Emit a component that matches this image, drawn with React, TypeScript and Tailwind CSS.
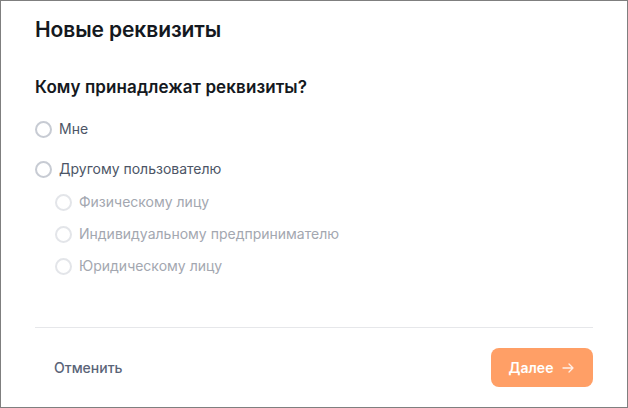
import React from "react";

function Radio({ label, muted }: { label: string; muted?: boolean }) {
  return (
    <label className="flex items-center gap-[7px] cursor-pointer">
      <span
        className={
          "block w-[17px] h-[17px] rounded-full border-[2px] bg-white " +
          (muted ? "border-[#e3e5e9]" : "border-[#c7cbd3]")
        }
      />
      <span className={"text-[14px] leading-[20px] " + (muted ? "text-[#a3a7b0]" : "text-[#4c5566]")}>{label}</span>
    </label>
  );
}

export default function App() {
  return (
    <div
      className="w-[628px] h-[408px] bg-white border border-[#7f7f7f] flex flex-col"
      style={{ fontFamily: "Inter, 'Noto Sans', sans-serif" }}
    >
      <div className="px-[34px] pt-[15px] flex-1 flex flex-col">
        <h1 className="text-[21px] leading-[28px] font-semibold text-[#141820] tracking-[-0.1px]">Новые реквизиты</h1>
        <h2 className="mt-[31px] text-[17px] leading-[24px] font-semibold text-[#141820] tracking-[0.1px]">Кому принадлежат реквизиты?</h2>
        <div className="mt-[20px] flex flex-col">
          <Radio label="Мне" />
          <div className="mt-[20px]">
            <Radio label="Другому пользователю" />
          </div>
          <div className="pl-[20px] mt-[13px] flex flex-col gap-[12px]">
            <Radio label="Физическому лицу" muted />
            <Radio label="Индивидуальному предпринимателю" muted />
            <Radio label="Юридическому лицу" muted />
          </div>
        </div>
        <div className="mt-auto border-t border-[#e6e7ea]" />
        <div className="flex items-center justify-between pt-[20px] pb-[20px]">
          <button className="ml-[19px] text-[14px] font-medium text-[#5a6478]">Отменить</button>
          <button className="w-[102px] h-[39px] rounded-[8px] bg-[#ff9f66] text-white text-[14px] font-semibold flex items-center justify-center gap-[8px]">
            Далее
            <svg width="14" height="14" viewBox="0 0 14 14" fill="none" stroke="white" strokeWidth="1.3" strokeLinecap="round" strokeLinejoin="round" opacity="0.85">
              <path d="M2 7h10M8 3l4 4-4 4" />
            </svg>
          </button>
        </div>
      </div>
    </div>
  );
}
